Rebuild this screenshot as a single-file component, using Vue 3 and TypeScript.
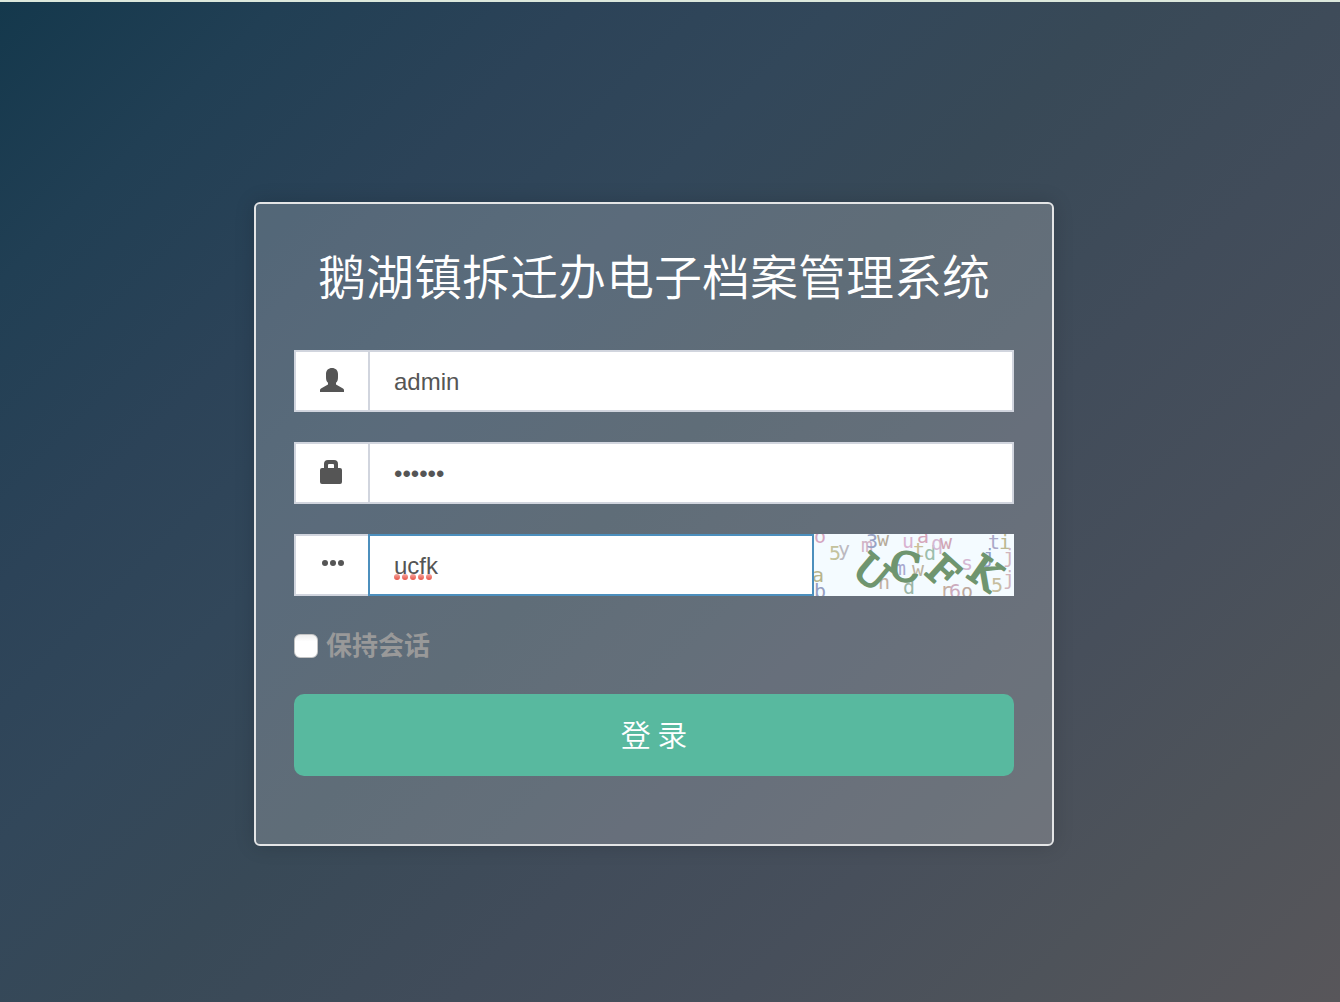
<script setup lang="ts">
import { ref } from 'vue'

interface Glyph {
  char: string
  x: number
  y: number
  color: string
  angle?: number
}

const username = ref('admin')
const password = ref('secret')
const captcha = ref('ucfk')
const keepSession = ref(false)

const noise: Glyph[] = [
  { char: 'o', x: 0, y: 9, color: '#d4a6bf' },
  { char: '5', x: 15, y: 26, color: '#c3c29c' },
  { char: 'y', x: 24, y: 22, color: '#bcb9c0' },
  { char: 'm', x: 47, y: 18, color: '#d2b3c6' },
  { char: '3', x: 52, y: 14, color: '#98a2c4' },
  { char: 'w', x: 63, y: 12, color: '#b6aa98' },
  { char: 'u', x: 88, y: 14, color: '#d9b3d1' },
  { char: 'a', x: 103, y: 9, color: '#d6a5bb' },
  { char: 't', x: 99, y: 23, color: '#cbbf98' },
  { char: 'd', x: 110, y: 26, color: '#9dbeac' },
  { char: 'q', x: 117, y: 16, color: '#d5b8d3' },
  { char: 'w', x: 126, y: 15, color: '#d0a5b5' },
  { char: 't', x: 174, y: 15, color: '#aaa9c8' },
  { char: 'i', x: 185, y: 15, color: '#bcb891' },
  { char: 'j', x: 169, y: 29, color: '#929fc3' },
  { char: 'j', x: 189, y: 29, color: '#d1b5bc' },
  { char: 's', x: 147, y: 36, color: '#d5b7d2' },
  { char: 'm', x: 80, y: 41, color: '#a8a8cf' },
  { char: 'w', x: 98, y: 42, color: '#bdb2a0' },
  { char: 'a', x: -2, y: 48, color: '#b7b48c' },
  { char: 'b', x: 0, y: 64, color: '#969ec1' },
  { char: 'n', x: 64, y: 55, color: '#c4b0a1' },
  { char: 'd', x: 89, y: 60, color: '#9bb5a6' },
  { char: 'r', x: 126, y: 63, color: '#c5ad9f' },
  { char: '6', x: 135, y: 64, color: '#cbaabc' },
  { char: 'o', x: 147, y: 64, color: '#bda89d' },
  { char: '5', x: 177, y: 58, color: '#c5bd9e' },
  { char: 'j', x: 189, y: 51, color: '#d1b5bc' },
]

const letters: Glyph[] = [
  { char: 'U', x: 58, y: 38, color: '#6f956f', angle: 40 },
  { char: 'C', x: 91, y: 33, color: '#6f956f', angle: 8 },
  { char: 'F', x: 129, y: 38, color: '#6f956f', angle: 42 },
  { char: 'K', x: 171, y: 39, color: '#6f956f', angle: 35 },
]
</script>

<template>
  <main class="page">
    <form class="card" @submit.prevent>
      <h1 class="title">鹅湖镇拆迁办电子档案管理系统</h1>

      <div class="field">
        <label class="addon" for="username" aria-label="用户名">
          <svg class="icon" viewBox="0 0 24 24" aria-hidden="true">
            <path d="M12 0C15.500 0 18 2.200 18 6V9C18 11.800 17.500 13.400 16 14.800V16.500L23 20.400Q24 21 24 22V24H0V22Q0 21 1 20.400L8 16.500V14.800C6.500 13.400 6 11.800 6 9V6C6 2.200 8.500 0 12 0Z" />
          </svg>
        </label>
        <input id="username" v-model="username" class="control" type="text" />
      </div>

      <div class="field">
        <label class="addon" for="password" aria-label="密码">
          <svg class="icon" viewBox="0 0 24 24" aria-hidden="true">
            <path fill-rule="evenodd" d="M4 8V4Q4 0 8 0H14Q18 0 18 4V8H20Q22 8 22 10V22Q22 24 20 24H2Q0 24 0 22V10Q0 8 2 8ZM8 8H14V5Q14 4 13 4H9Q8 4 8 5Z" />
          </svg>
        </label>
        <input id="password" v-model="password" class="control" type="password" />
      </div>

      <div class="field">
        <label class="addon" for="captcha" aria-label="验证码">
          <svg class="icon" viewBox="0 0 24 24" aria-hidden="true">
            <circle cx="5" cy="11" r="3" />
            <circle cx="13" cy="11" r="3" />
            <circle cx="21" cy="11" r="3" />
          </svg>
        </label>
        <div class="entry">
          <input id="captcha" v-model="captcha" class="control active" type="text" spellcheck="false" />
          <svg class="spelling" viewBox="0 0 38 6" aria-hidden="true">
            <defs>
              <linearGradient id="dot" x1="0" y1="0" x2="0" y2="1">
                <stop offset="0" stop-color="#f4a79f" />
                <stop offset="1" stop-color="#e95448" />
              </linearGradient>
            </defs>
            <circle v-for="n in 5" :key="n" :cx="n * 8 - 5" cy="3" r="3" fill="url(#dot)" />
          </svg>
        </div>
        <svg class="captcha" viewBox="0 0 200 62" role="img" aria-label="验证码图片">
          <rect width="200" height="62" fill="#f4fbff" />
          <text v-for="(g, i) in noise" :key="i" class="noise" :x="g.x" :y="g.y" :fill="g.color">{{ g.char }}</text>
          <g v-for="g in letters" :key="g.char" :transform="`translate(${g.x} ${g.y}) rotate(${g.angle})`">
            <text class="letter" y="14" :fill="g.color" :stroke="g.color">{{ g.char }}</text>
          </g>
        </svg>
      </div>

      <label class="remember">
        <input v-model="keepSession" class="tick" type="checkbox" />
        <span>保持会话</span>
      </label>

      <button class="submit" type="submit">登 录</button>
    </form>
  </main>
</template>

<style>
body {
  margin: 0;
}
</style>

<style scoped>
.page {
  box-sizing: border-box;
  min-height: 100vh;
  padding: 200px 32px 32px 0;
  border-top: 2px solid #dce8dc;
  background: linear-gradient(135deg, #14384c 0%, #213f54 12%, #2c4358 25%, #32475a 36%, #384957 48%, #414c5a 62%, #474f5b 74%, #4e535a 86%, #58565a 100%);
  font-family: "Liberation Sans", "Noto Sans CJK SC", sans-serif;
}

.card {
  box-sizing: border-box;
  width: 100%;
  max-width: 800px;
  margin: 0 auto;
  padding: 34px 38px 68px;
  border: 2px solid #e4e5e6;
  border-radius: 6px;
  background: rgba(255, 255, 255, 0.2);
  background-clip: padding-box;
  box-shadow: 0 0 20px rgba(0, 0, 0, 0.15);
}

.title {
  margin: 0 0 40px;
  color: #fff;
  font-family: "Noto Sans CJK SC", sans-serif;
  font-size: 48px;
  font-weight: 350;
  line-height: 72px;
  text-align: center;
}

.field {
  display: flex;
  height: 62px;
  margin-bottom: 30px;
}

.addon {
  display: flex;
  box-sizing: border-box;
  width: 74px;
  padding: 16px 0 0 24px;
  border: 2px solid #d1d5de;
  border-right: 0;
  background: #fff;
}

.icon {
  width: 24px;
  height: 24px;
  fill: #555;
}

.control {
  box-sizing: border-box;
  flex: 1;
  width: 100%;
  min-width: 0;
  height: 62px;
  margin: 0;
  padding: 2px 24px 0;
  border: 2px solid #d1d5de;
  border-radius: 0;
  outline: 0;
  background: #fff;
  color: #555;
  font-family: "Liberation Sans", sans-serif;
  font-size: 24px;
}

.active {
  border-color: #4c8fbd;
}

.entry {
  position: relative;
  flex: 1;
}

.spelling {
  position: absolute;
  top: 40px;
  left: 26px;
  width: 38px;
  height: 6px;
}

.captcha {
  width: 200px;
  height: 62px;
}

.noise {
  font-family: "DejaVu Sans Mono", monospace;
  font-size: 20px;
}

.letter {
  font-family: "DejaVu Serif", serif;
  font-size: 40px;
  font-weight: 400;
  stroke-width: 2px;
  stroke-linejoin: round;
  text-anchor: middle;
}

.remember {
  display: flex;
  align-items: center;
  gap: 8px;
  width: fit-content;
  height: 40px;
  color: #999;
  font-size: 26px;
  font-weight: 600;
  line-height: 40px;
}

.tick {
  width: 24px;
  height: 24px;
  margin: 0;
  border: 1px solid #c4c4c4;
  border-radius: 6px;
  appearance: none;
  background: linear-gradient(#eee, #fff 30%);
}

.tick:checked {
  background: #4c8fbd;
}

.submit {
  display: block;
  width: 100%;
  height: 82px;
  margin: 28px 0 0;
  padding: 0 0 4px;
  border: 0;
  border-radius: 10px;
  background: #58b99f;
  color: #fff;
  font-family: "Noto Sans CJK SC", sans-serif;
  font-size: 30px;
  font-weight: 350;
}
</style>
